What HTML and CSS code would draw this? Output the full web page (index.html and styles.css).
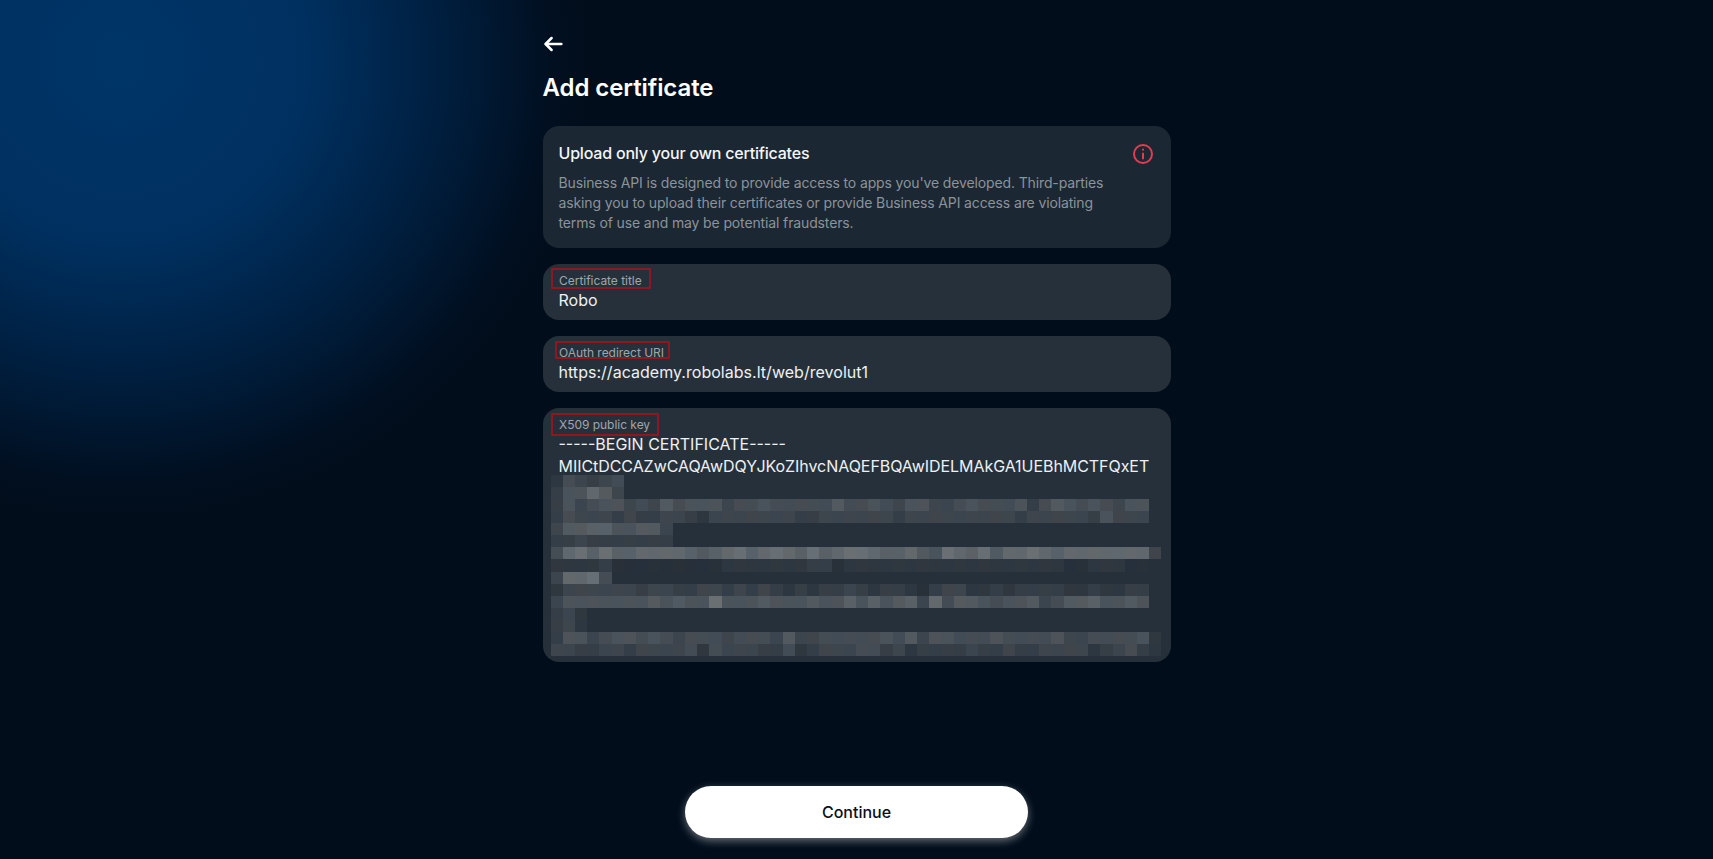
FILE: index.html
```html
<!DOCTYPE html>
<html lang="en">
<head>
<meta charset="utf-8">
<title>Add certificate</title>
<link rel="stylesheet" href="styles.css">
</head>
<body>
<div class="page">
  <main class="content">
    <button class="back" aria-label="Back">
      <svg width="24" height="24" viewBox="0 0 24 24" fill="none" stroke="currentColor" stroke-width="2.5" stroke-linecap="round" stroke-linejoin="round"><path d="M18.4 12H2.8"/><path d="M8.6 6 2.6 12l6 6"/></svg>
    </button>
    <h1 class="title">Add certificate</h1>
    <section class="notice">
      <div class="notice-head">
        <h2 class="notice-title">Upload only your own certificates</h2>
        <svg class="notice-icon" width="24" height="24" viewBox="0 0 24 24" fill="none" stroke="currentColor" stroke-width="2" stroke-linecap="round"><circle cx="12" cy="12" r="9"/><path d="M12 11.5v5"/><path d="M12 7.6v.2"/></svg>
      </div>
      <p class="notice-text">Business API is designed to provide access to apps you've developed. Third-parties asking you to upload their certificates or provide Business API access are violating terms of use and may be potential fraudsters.</p>
    </section>
    <div class="field">
      <div class="label">Certificate title</div>
      <div class="value">Robo</div>
      <span class="mark mark-title"></span>
    </div>
    <div class="field">
      <div class="label">OAuth redirect URI</div>
      <div class="value value-url">https://academy.robolabs.lt/web/revolut1</div>
      <span class="mark mark-uri"></span>
    </div>
    <div class="field field-key">
      <div class="label label-key">X509 public key</div>
      <div class="value value-key">-----BEGIN CERTIFICATE-----</div>
      <div class="value value-key value-long">MIICtDCCAZwCAQAwDQYJKoZIhvcNAQEFBQAwIDELMAkGA1UEBhMCTFQxET</div>
      <div class="mosaic" id="mosaic"></div>
      <span class="mark mark-key"></span>
    </div>
  </main>
  <footer class="actions">
    <button class="continue">Continue</button>
  </footer>
</div>
<script src="mosaic.js"></script>
</body>
</html>
```

FILE: styles.css
```css
* { box-sizing: border-box; }
html, body { margin: 0; height: 100%; }
body {
  font-family: Inter, "Liberation Sans", sans-serif;
  color: #fff;
  background-color: #010d1b;
  background-image: radial-gradient(ellipse 470px 460px at 120px 60px, #003568 0%, #003060 40%, #001f40 68%, #010f20 92%, #010d1b 100%);
  background-repeat: no-repeat;
  overflow: hidden;
}
.page {
  height: 859px;
  display: flex;
  flex-direction: column;
  align-items: center;
}
.content {
  width: 628px;
  padding-top: 32px;
  flex: 1;
}
.back {
  display: block;
  width: 24px;
  height: 24px;
  padding: 0;
  border: 0;
  background: none;
  color: #fff;
}
.title {
  margin: 15px 0 0;
  height: 55px;
  font-size: 24px;
  line-height: 34px;
  font-weight: 600;
  letter-spacing: -0.08px;
  color: #fff;
}
.notice {
  background: #1b2733;
  border-radius: 16px;
  padding: 16px;
  margin-bottom: 16px;
}
.notice-head {
  display: flex;
  justify-content: space-between;
  align-items: flex-start;
  height: 24px;
}
.notice-title {
  margin: 0;
  font-size: 16px;
  line-height: 22px;
  font-weight: 500;
  letter-spacing: -0.2px;
  color: #f5f6f7;
}
.notice-icon { color: #e23d50; }
.notice-text {
  margin: 7px 0 -1px;
  width: 560px;
  font-size: 14px;
  line-height: 20px;
  letter-spacing: -0.13px;
  color: #8c9399;
}
.field {
  position: relative;
  background: #26303a;
  border-radius: 16px;
  height: 56px;
  padding: 8px 16px;
  margin-bottom: 16px;
}
.field-key {
  height: 254px;
  padding-bottom: 5px;
}
.label {
  margin: 1px 0 -1px;
  font-size: 12px;
  line-height: 16px;
  color: #a0a6ac;
  text-indent: 0.5px;
  letter-spacing: -0.03px;
}
.label-key { margin-bottom: 0; }
.value {
  font-size: 16px;
  line-height: 24px;
  color: #eef0f2;
  white-space: nowrap;
}
.value-url { letter-spacing: 0.03px; }
.value-key { line-height: 22px; }
.value-long { letter-spacing: -0.055px; }
.mosaic {
  margin: -2px 0 0 -8px;
  width: 612px;
  display: grid;
  grid-template-columns: repeat(50, 12.22px);
  grid-auto-rows: 12.07px;
}
.cell { display: block; }
.mark {
  position: absolute;
  border: 2px solid #8f1721;
  border-radius: 1px;
}
.mark-title { left: 8px; top: 4px; width: 100px; height: 21px; }
.mark-uri { left: 12px; top: 5px; width: 115px; height: 18px; }
.mark-key { left: 8px; top: 5px; width: 108px; height: 23px; }
.actions {
  padding-bottom: 21px;
}
.continue {
  display: block;
  width: 343px;
  height: 52px;
  border: 0;
  border-radius: 26px;
  background: #fff;
  color: #0b0f14;
  font-family: Inter, "Liberation Sans", sans-serif;
  font-size: 16px;
  font-weight: 500;
  box-shadow: 0 3px 8px rgba(255, 255, 255, 0.4);
}
```

FILE: mosaic.js
```js
var rows = [
  "143234",
  "255863",
  "2534553436455534454444464" + "454355334544452465454355",
  "2433323223321333333322333" + "333233333333323333325333",
  "3667755663",
  "2232222222",
  "4897977888876789789879789" + "9877865987968898788888883",
  "1111200000000011111112201" + "1111111111111111100111000",
  "38894",
  "1333333233223323232121223" + "212210233112122221121122",
  "3555555565655955565556557" + "575673846654556346675565",
  "231",
  "231",
  "2553455454344434443633444" + "4454635544454444533444451",
  "3322332333341433322412333" + "4423122223223223333123421"
];
var box = document.getElementById("mosaic");
rows.forEach(function (row, r) {
  for (var c = 0; c < 50; c++) {
    var cell = document.createElement("span");
    cell.className = "cell";
    if (c < row.length) {
      var d = parseInt(row[c], 10);
      var t = ((r * 7 + c * 13) % 5) - 2;
      cell.style.backgroundColor = "rgb(" + (39 + d * 7.2 + t) + "," + (48 + d * 7) + "," + (58 + d * 6.4 - t) + ")";
    }
    box.appendChild(cell);
  }
});
```
